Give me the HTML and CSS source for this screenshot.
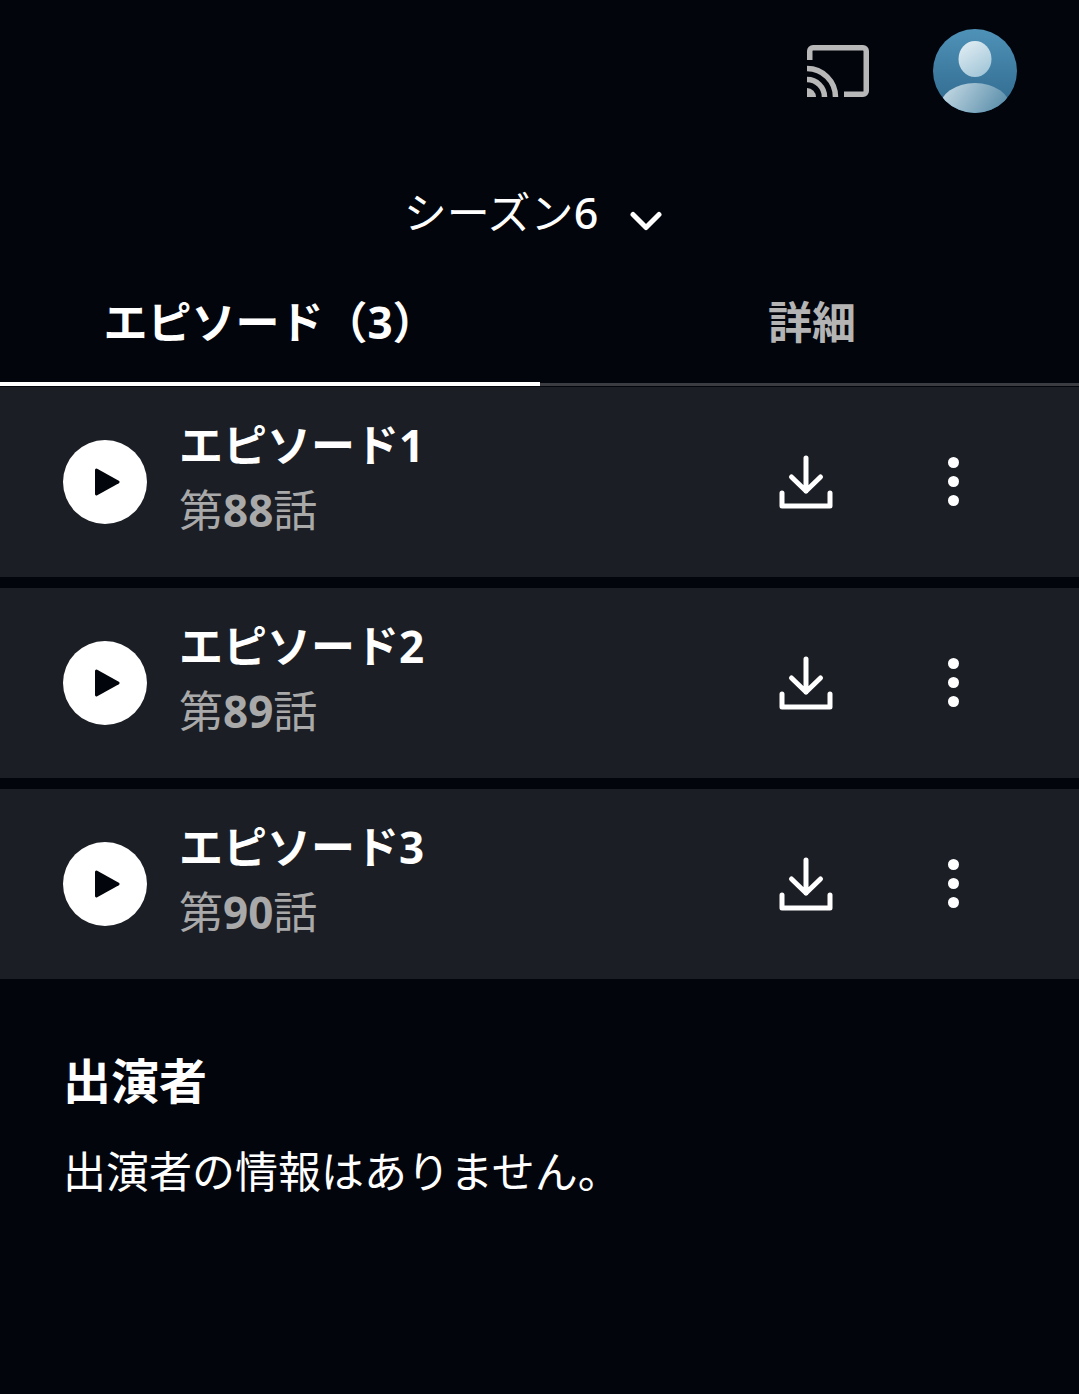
FILE: index.html
```html
<!DOCTYPE html>
<html lang="ja">
<head>
  <meta charset="utf-8">
  <title>シーズン6</title>
  <link rel="stylesheet" href="styles.css">
</head>
<body>
  <header class="top-bar">
    <svg class="cast-icon" viewBox="0 0 62 52" fill="none" stroke="#b8b8b8" stroke-width="5.500">
      <path d="M2.750 15V6a3.250 3.250 0 0 1 3.250-3.250h50a3.250 3.250 0 0 1 3.250 3.250v40a3.250 3.250 0 0 1-3.250 3.250H37"/>
      <path d="M0 23.500A28.500 28.500 0 0 1 28.500 52"/>
      <path d="M0 34.500A17.500 17.500 0 0 1 17.500 52"/>
      <path d="M0 43a9 9 0 0 1 9 9H0z" fill="#b8b8b8" stroke="none"/>
    </svg>
    <svg class="avatar" viewBox="0 0 84 84">
      <defs>
        <linearGradient id="avatarBg" x1="0" y1="0" x2="0" y2="1">
          <stop offset="0" stop-color="#4f92b8"/>
          <stop offset="1" stop-color="#2f678c"/>
        </linearGradient>
        <linearGradient id="avatarHead" x1="0" y1="0" x2="0.6" y2="1">
          <stop offset="0" stop-color="#e6f0f5"/>
          <stop offset="1" stop-color="#a5c8d9"/>
        </linearGradient>
        <linearGradient id="avatarBody" x1="0" y1="0" x2="1" y2="0.5">
          <stop offset="0" stop-color="#cfe1ea"/>
          <stop offset="1" stop-color="#4f86a4"/>
        </linearGradient>
        <clipPath id="avatarClip"><circle cx="42" cy="42" r="42"/></clipPath>
      </defs>
      <circle cx="42" cy="42" r="42" fill="url(#avatarBg)"/>
      <ellipse cx="42" cy="30" rx="16.500" ry="18" fill="url(#avatarHead)"/>
      <ellipse cx="42" cy="80" rx="36" ry="26" fill="url(#avatarBody)" clip-path="url(#avatarClip)"/>
    </svg>
  </header>

  <div class="season">
    <span class="season-name">シーズン<span class="season-num">6</span></span>
    <svg class="chevron" viewBox="0 0 32 20" fill="none" stroke="#fff" stroke-width="5" stroke-linecap="round" stroke-linejoin="round">
      <path d="M3 3.500l13 13 13-13"/>
    </svg>
  </div>

  <nav class="tabs">
    <div class="tab tab-active">エピソード（<span class="num">3</span>）</div>
    <div class="tab tab-details">詳細</div>
  </nav>

  <ul class="episodes">
    <li class="episode">
      <span class="play"><svg viewBox="0 0 26 28"><path d="M1 2v24a1.500 1.500 0 0 0 2.200 1.300l21.600-12a1.500 1.500 0 0 0 0-2.600L3.200.7A1.500 1.500 0 0 0 1 2z"/></svg></span>
      <div class="episode-text">
        <div class="episode-title">エピソード<span class="num">1</span></div>
        <div class="episode-sub">第<span class="num">88</span>話</div>
      </div>
      <svg class="download" viewBox="0 0 54 54" fill="none" stroke="#fff" stroke-width="5" stroke-linecap="round" stroke-linejoin="round">
        <path d="M27 3v33M12.500 22L27 36l14.500-14M3 38v13h48V38"/>
      </svg>
      <span class="more"><i></i><i></i><i></i></span>
    </li>
    <li class="episode">
      <span class="play"><svg viewBox="0 0 26 28"><path d="M1 2v24a1.500 1.500 0 0 0 2.200 1.300l21.600-12a1.500 1.500 0 0 0 0-2.600L3.200.7A1.500 1.500 0 0 0 1 2z"/></svg></span>
      <div class="episode-text">
        <div class="episode-title">エピソード<span class="num">2</span></div>
        <div class="episode-sub">第<span class="num">89</span>話</div>
      </div>
      <svg class="download" viewBox="0 0 54 54" fill="none" stroke="#fff" stroke-width="5" stroke-linecap="round" stroke-linejoin="round">
        <path d="M27 3v33M12.500 22L27 36l14.500-14M3 38v13h48V38"/>
      </svg>
      <span class="more"><i></i><i></i><i></i></span>
    </li>
    <li class="episode">
      <span class="play"><svg viewBox="0 0 26 28"><path d="M1 2v24a1.500 1.500 0 0 0 2.200 1.300l21.600-12a1.500 1.500 0 0 0 0-2.600L3.200.7A1.500 1.500 0 0 0 1 2z"/></svg></span>
      <div class="episode-text">
        <div class="episode-title">エピソード<span class="num">3</span></div>
        <div class="episode-sub">第<span class="num">90</span>話</div>
      </div>
      <svg class="download" viewBox="0 0 54 54" fill="none" stroke="#fff" stroke-width="5" stroke-linecap="round" stroke-linejoin="round">
        <path d="M27 3v33M12.500 22L27 36l14.500-14M3 38v13h48V38"/>
      </svg>
      <span class="more"><i></i><i></i><i></i></span>
    </li>
  </ul>

  <section class="cast">
    <h2>出演者</h2>
    <p>出演者の情報はありません。</p>
  </section>
</body>
</html>
```

FILE: styles.css
```css
html, body {
  margin: 0;
  padding: 0;
}

body {
  height: 1394px;
  overflow: hidden;
  background-color: #02050c;
  color: #fff;
  font-family: "Noto Sans", "Noto Sans CJK JP", sans-serif;
}

.top-bar {
  display: flex;
  justify-content: flex-end;
  align-items: center;
  height: 84px;
  padding: 29px 62px 0 0;
}

.cast-icon {
  width: 62px;
  height: 52px;
  margin-right: 64px;
}

.avatar {
  width: 84px;
  height: 84px;
}

.season {
  display: flex;
  justify-content: center;
  align-items: center;
  height: 60px;
  margin-top: 70px;
  padding-right: 13px;
}

.season-name {
  margin-top: -6px;
  font-size: 43px;
  font-weight: 400;
}

.season-num {
  font-weight: 500;
}

.chevron {
  width: 32px;
  height: 20px;
  margin: 16px 0 0 32px;
}

.tabs {
  display: flex;
  height: 140px;
  border-bottom: 3px solid #3a3c42;
}

.tab {
  flex: 1;
  box-sizing: border-box;
  height: 143px;
  padding-top: 49px;
  font-size: 44px;
  font-weight: 700;
  line-height: 60px;
  text-align: center;
  color: #b4b4b4;
}

.tab-active {
  flex: none;
  width: 540px;
  color: #fff;
  border-bottom: 4px solid #fff;
}

.tab-details {
  padding-left: 5px;
}

.num {
  font-weight: 700;
}

.episodes {
  list-style: none;
  margin: 1px 0 0;
  padding: 0;
}

.episode {
  display: flex;
  align-items: center;
  height: 190px;
  margin-bottom: 11px;
  padding-left: 63px;
  background-color: #1b1e25;
}

.play {
  display: flex;
  justify-content: center;
  align-items: center;
  width: 84px;
  height: 84px;
  border-radius: 50%;
  background-color: #fff;
}

.play svg {
  width: 26px;
  height: 28px;
  margin-left: 4px;
  fill: #02050c;
}

.episode-text {
  flex: 1;
  margin: -4px 0 0 32px;
}

.episode-title {
  font-size: 44px;
  font-weight: 700;
  line-height: 60px;
}

.episode-sub {
  font-size: 44px;
  font-weight: 400;
  line-height: 70px;
  color: #a9a9a9;
}

.download {
  width: 54px;
  height: 54px;
}

.more {
  display: flex;
  flex-direction: column;
  align-items: center;
  gap: 8px;
  width: 12px;
  margin: -2px 120px 0 114px;
}

.more i {
  width: 11px;
  height: 11px;
  border-radius: 50%;
  background-color: #fff;
}

.cast {
  margin-top: 69px;
  padding-left: 63px;
}

.cast h2 {
  margin: 0;
  font-size: 48px;
  font-weight: 700;
  line-height: 66px;
}

.cast p {
  margin: 28px 0 0;
  font-size: 43px;
  font-weight: 400;
  line-height: 60px;
}
```
